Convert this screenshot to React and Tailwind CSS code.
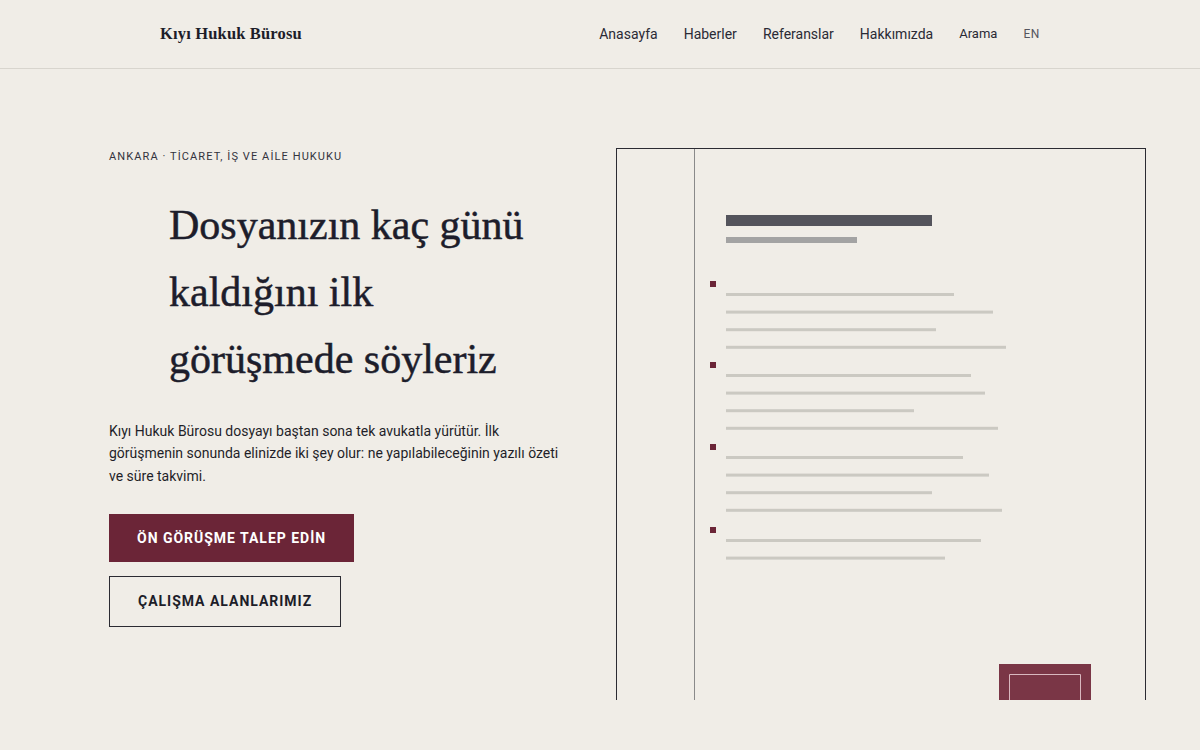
const groups = [
  { y: 281, lines: [954, 993, 936, 1006] },
  { y: 362, lines: [971, 985, 914, 998] },
  { y: 444, lines: [963, 989, 932, 1002] },
  { y: 527, lines: [981, 945] },
];

function DocumentArt() {
  // frame origin is x=616, y=148 in page coords
  const ox = 616;
  const oy = 148;
  return (
    <svg width="530" height="552" viewBox="0 0 530 552" className="block">
      <line x1="0.5" y1="0" x2="0.5" y2="552" stroke="#2b2b33" strokeWidth="1" />
      <line x1="529.5" y1="0" x2="529.5" y2="552" stroke="#2b2b33" strokeWidth="1" />
      <line x1="0" y1="0.5" x2="530" y2="0.5" stroke="#2b2b33" strokeWidth="1" />
      <line x1={694 - ox + 0.5} y1="1" x2={694 - ox + 0.5} y2="552" stroke="#8a8a8a" strokeWidth="1" />
      <rect x={726 - ox} y={215 - oy} width="206" height="11" fill="#54545c" />
      <rect x={726 - ox} y={237 - oy} width="131" height="6" fill="#a3a3a3" />
      {groups.map((g, i) => (
        <g key={i}>
          <rect x={710 - ox} y={g.y - oy} width="6" height="6" fill="#6b2537" />
          {g.lines.map((end, j) => (
            <rect
              key={j}
              x={726 - ox}
              y={g.y + 12 + j * 17.6 - oy}
              width={end - 726}
              height="3"
              fill="#cbc9c2"
            />
          ))}
        </g>
      ))}
      <rect x={999 - ox} y={664 - oy} width="92" height="40" fill="#7a3646" />
      <path
        d={`M ${1009.5 - ox} 560 V ${674.5 - oy} H ${1080.5 - ox} V 560`}
        fill="none"
        stroke="#d9b8bf"
        strokeWidth="1"
      />
    </svg>
  );
}

export default function App() {
  return (
    <div className="min-h-[750px] bg-[#f0ede7] text-[#1d1d29]" style={{ fontFamily: 'Roboto, "Liberation Sans", sans-serif' }}>
      <header className="h-[69px] border-b border-[#d8d5ce]">
        <div className="w-[880px] mx-auto h-full flex items-center justify-between">
          <a className="text-[16.5px] font-bold tracking-[0.01em]" style={{ fontFamily: '"Liberation Serif", serif' }}>
            Kıyı Hukuk Bürosu
          </a>
          <nav className="flex items-center gap-[26px] text-[14px] text-[#2a2a35]">
            <a>Anasayfa</a>
            <a>Haberler</a>
            <a>Referanslar</a>
            <a>Hakkımızda</a>
            <a className="text-[13px]">Arama</a>
            <a className="text-[12px] text-[#55555e] tracking-[0.05em]">EN</a>
          </nav>
        </div>
      </header>

      <main className="flex h-[631px] overflow-hidden pl-[109px] pt-[79px]">
        <section className="w-[450px] shrink-0">
          <p className="text-[11px] tracking-[0.1em] text-[#33333d] mt-[1px]">ANKARA · TİCARET, İŞ VE AİLE HUKUKU</p>
          <h1
            className="mt-[26px] ml-[60px] max-w-[380px] text-[42px] leading-[67px] text-[#1d1d2b] [-webkit-text-stroke:0.5px_#1d1d2b]"
            style={{ fontFamily: '"Liberation Serif", serif' }}
          >
            Dosyanızın kaç günü kaldığını ilk görüşmede söyleriz
          </h1>
          <p className="mt-[27px] text-[14px] leading-[22.5px] text-[#1f1f29]">
            Kıyı Hukuk Bürosu dosyayı baştan sona tek avukatla yürütür. İlk görüşmenin sonunda elinizde iki şey olur: ne yapılabileceğinin yazılı özeti ve süre takvimi.
          </p>
          <div className="mt-[27px] flex flex-col items-start gap-[14px]">
            <button className="h-[48px] px-[28px] bg-[#6b2537] text-white text-[14px] font-bold tracking-[0.07em]">
              ÖN GÖRÜŞME TALEP EDİN
            </button>
            <button className="h-[51px] px-[28px] border border-[#2b2b33] text-[#1d1d29] text-[14px] font-bold tracking-[0.07em]">
              ÇALIŞMA ALANLARIMIZ
            </button>
          </div>
        </section>
        <div className="ml-[57px]">
          <DocumentArt />
        </div>
      </main>
    </div>
  );
}
